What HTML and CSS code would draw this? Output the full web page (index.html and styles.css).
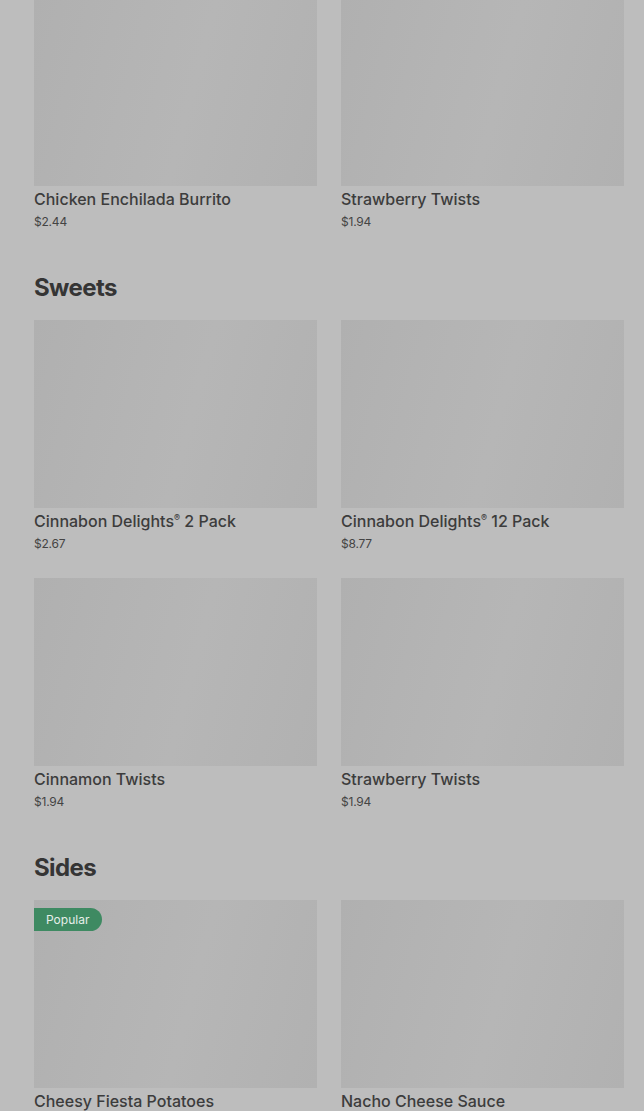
FILE: index.html
```html
<!DOCTYPE html>
<html lang="en">
<head>
<meta charset="utf-8">
<title>Menu</title>
<link rel="stylesheet" href="styles.css">
</head>
<body>
<main class="menu">
  <section class="section">
    <div class="grid">
      <div class="card">
        <div class="img"></div>
        <div class="name">Chicken Enchilada Burrito</div>
        <div class="price">$2.44</div>
      </div>
      <div class="card">
        <div class="img"></div>
        <div class="name">Strawberry Twists</div>
        <div class="price">$1.94</div>
      </div>
    </div>
  </section>
  <section class="section">
    <h2 class="heading">Sweets</h2>
    <div class="grid">
      <div class="card">
        <div class="img"></div>
        <div class="name">Cinnabon Delights<sup class="reg">®</sup> 2 Pack</div>
        <div class="price">$2.67</div>
      </div>
      <div class="card">
        <div class="img"></div>
        <div class="name">Cinnabon Delights<sup class="reg">®</sup> 12 Pack</div>
        <div class="price">$8.77</div>
      </div>
      <div class="card">
        <div class="img"></div>
        <div class="name">Cinnamon Twists</div>
        <div class="price">$1.94</div>
      </div>
      <div class="card">
        <div class="img"></div>
        <div class="name">Strawberry Twists</div>
        <div class="price">$1.94</div>
      </div>
    </div>
  </section>
  <section class="section">
    <h2 class="heading">Sides</h2>
    <div class="grid">
      <div class="card">
        <div class="img"><span class="badge">Popular</span></div>
        <div class="name">Cheesy Fiesta Potatoes</div>
        <div class="price">$2.19</div>
      </div>
      <div class="card">
        <div class="img"></div>
        <div class="name">Nacho Cheese Sauce</div>
        <div class="price">$1.09</div>
      </div>
    </div>
  </section>
</main>
</body>
</html>
```

FILE: styles.css
```css
html, body {
  margin: 0;
  padding: 0;
  background: #bdbdbd;
  overflow: hidden;
}
body {
  font-family: Inter, "Liberation Sans", sans-serif;
  color: #3a3a3a;
}
.menu {
  margin-top: -2px;
  padding: 0 20px 0 34px;
}
.section + .section {
  margin-top: 38px;
}
.heading {
  margin: 0 0 16px;
  font-size: 24px;
  line-height: 32px;
  font-weight: 700;
  color: #353535;
  letter-spacing: -0.6px;
}
.grid {
  display: grid;
  grid-template-columns: 283px 283px;
  column-gap: 24px;
  row-gap: 22px;
}
.card {
  display: flex;
  flex-direction: column;
}
.img {
  position: relative;
  height: 188px;
  background: linear-gradient(105deg, #b0b0b0 0%, #b4b4b4 35%, #b6b6b6 55%, #b1b1b1 100%);
}
.name {
  padding-top: 1px;
  font-size: 16px;
  line-height: 24px;
  font-weight: 450;
  color: #3c3c3c;
}
.reg {
  font-size: 9px;
  vertical-align: 6px;
  line-height: 0;
}
.price {
  margin-top: -1px;
  font-size: 12px;
  line-height: 24px;
  color: #444;
  letter-spacing: -0.2px;
}
.badge {
  position: absolute;
  left: 0;
  top: 8px;
  height: 23px;
  line-height: 23px;
  padding: 0 13px 0 12px;
  background: #3e8a62;
  color: #e6eee9;
  font-size: 12px;
  border-radius: 0 12px 12px 0;
}
```
